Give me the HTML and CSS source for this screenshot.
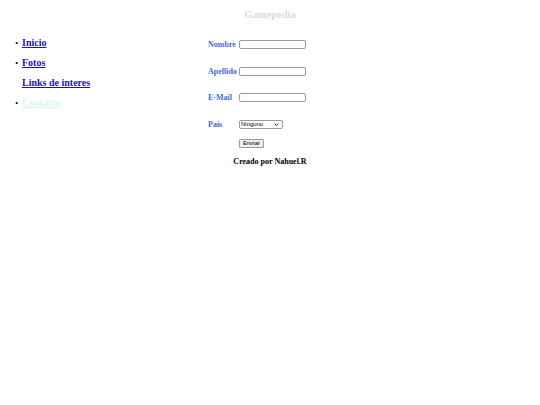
FILE: index.html
```html
<!DOCTYPE html>
<html lang="es">
<head>
<meta charset="utf-8">
<title>Gamepedia</title>
<link rel="stylesheet" href="styles.css">
</head>
<body>
<header class="top">
  <h1 class="brand">Gamepedia</h1>
</header>
<div class="main">
  <nav class="side">
    <ul class="menu">
      <li class="item"><a class="link" href="#">Inicio</a></li>
      <li class="item"><a class="link" href="#">Fotos</a></li>
      <li class="item nobullet"><a class="link" href="#">Links de interes</a></li>
      <li class="item"><a class="link light" href="#">Contacto</a></li>
    </ul>
  </nav>
  <form class="form">
    <div class="row"><label class="lbl" for="n">Nombre</label><input class="txt" id="n" type="text"></div>
    <div class="row"><label class="lbl" for="a">Apellido</label><input class="txt" id="a" type="text"></div>
    <div class="row"><label class="lbl" for="e">E-Mail</label><input class="txt" id="e" type="text"></div>
    <div class="row"><label class="lbl" for="p">Pais</label>
      <span class="selwrap">
        <select class="sel" id="p"><option>Ninguno</option></select>
        <svg class="chev" width="5" height="3" viewBox="0 0 5 3" aria-hidden="true"><path d="M0.5 0.5 L2.5 2.5 L4.5 0.5" fill="none" stroke="#222" stroke-width="0.9"/></svg>
      </span>
    </div>
    <div class="row btnrow"><span class="lbl"></span><button class="btn" type="button">Enviar</button></div>
  </form>
</div>
<footer class="foot">Creado por Nahuel.R</footer>
</body>
</html>
```
FILE: styles.css
```css
html, body {
  margin: 0;
  padding: 0;
  background: #fff;
  font-family: "Liberation Serif", "Times New Roman", serif;
}
.top {
  height: 28px;
  display: flex;
  align-items: center;
  justify-content: center;
}
.brand {
  margin: 0;
  font-size: 10.5px;
  font-weight: bold;
  color: #dcdcdc;
}
.main {
  display: flex;
}
.side {
  width: 208px;
  padding-left: 8px;
  box-sizing: border-box;
}
.menu {
  margin: 8px 0 0;
  padding-left: 14px;
  list-style: disc;
  font-size: 10px;
}
.item {
  height: 20px;
  line-height: 14px;
}
.item::marker {
  content: "\2022\2002";
  font-size: 8px;
  color: #000;
}
.nobullet {
  list-style: none;
}
.nobullet::marker {
  content: none;
}
.link {
  color: #1a14b8;
  font-weight: bold;
}
.light {
  color: #dcf3ee;
}
.form {
  display: flex;
  flex-direction: column;
  padding-top: 3px;
}
.row {
  display: flex;
  align-items: center;
  height: 26.7px;
}
.btnrow {
  height: 17px;
  align-items: flex-start;
  padding-top: 1px;
}
.lbl {
  width: 31px;
  font-size: 8px;
  font-weight: bold;
  color: #4169e1;
}
.txt {
  width: 67px;
  height: 9px;
  box-sizing: border-box;
  border: 1px solid #9a9a9a;
  border-radius: 2px;
  padding: 0;
  margin: 0;
  font-size: 6px;
}
.selwrap {
  position: relative;
  display: inline-flex;
}
.sel {
  -webkit-appearance: none;
  appearance: none;
  width: 44px;
  height: 9px;
  box-sizing: border-box;
  border: 1px solid #9a9a9a;
  border-radius: 2px;
  padding: 0 1px;
  margin: 0;
  font-family: "Liberation Sans", Arial, sans-serif;
  font-size: 6px;
  line-height: 7px;
  background: #fff;
  color: #000;
}
.chev {
  position: absolute;
  right: 4px;
  top: 3px;
  pointer-events: none;
}
.btn {
  height: 9px;
  padding: 0 3px;
  box-sizing: border-box;
  border: 1px solid #9a9a9a;
  border-radius: 1px;
  background: #efefef;
  font-family: "Liberation Sans", Arial, sans-serif;
  font-size: 6px;
  line-height: 7px;
  color: #000;
}
.foot {
  text-align: center;
  font-size: 8px;
  font-weight: bold;
  color: #000;
  padding-top: 1px;
}
```
